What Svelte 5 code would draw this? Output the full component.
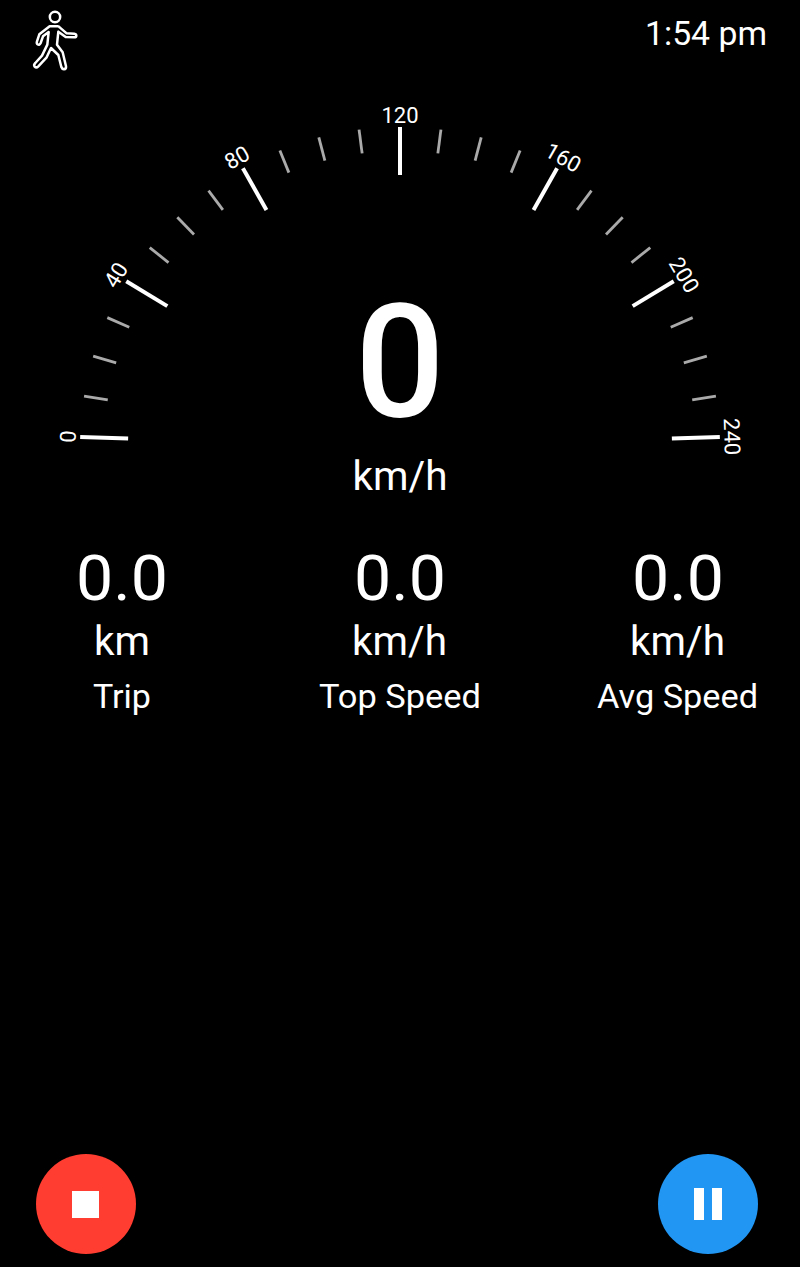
<script>
  const step = 88.2 / 12;
  const ticks = Array.from({ length: 25 }, (_, i) => ({
    angle: (i - 12) * step,
    major: i % 4 === 0,
    value: i * 10
  }));
  const stats = [
    { value: '0.0', unit: 'km', unitWidth: 56, name: 'Trip', nameWidth: 58 },
    { value: '0.0', unit: 'km/h', unitWidth: 95, name: 'Top Speed', nameWidth: 162 },
    { value: '0.0', unit: 'km/h', unitWidth: 95, name: 'Avg Speed', nameWidth: 161 }
  ];
</script>

{#snippet line(text, width, size, height, base)}
  <svg class="line" {width} {height}>
    <text x="0" y={base} font-size={size} textLength={width} lengthAdjust="spacingAndGlyphs">{text}</text>
  </svg>
{/snippet}

<main>
  <header>
    <svg class="walk" width="80" height="80" viewBox="0 0 240 240" aria-label="Walking">
      <circle cx="105" cy="51" r="15.5" />
      <path d="M89 79H113Q117 79 120 83L140 100L163 101Q169 102 169 107Q169 112 162 112L137 111L115 95L111 134L128 157L138 199Q139 207 132 208Q126 207 124 201L115 165L93 144L80 172L55 199Q49 205 44 200Q40 195 46 189L66 167L82 134L86 96L69 109L62 129Q59 136 53 133Q49 131 51 124L58 103Z" />
    </svg>
    <div class="time">{@render line('1:54 pm', 122, 33, 46, 31)}</div>
  </header>

  <svg class="gauge" width="800" height="430" viewBox="0 90 800 430">
    {#each ticks as t}
      <g transform="rotate({t.angle} 400 447)">
        <line x1="400" x2="400" y1="127" y2={t.major ? 175 : 151} class:major={t.major} />
        {#if t.major}
          <text class="mark" x="400" y="122.5">{t.value}</text>
        {/if}
      </g>
    {/each}
    <text class="speed" x="400" y="416">0</text>
    <text x="352.5" y="490" font-size="40" textLength="95" lengthAdjust="spacingAndGlyphs">km/h</text>
  </svg>

  <section>
    {#each stats as s}
      <div class="stat">
        {@render line(s.value, 92, 63, 70, 59.5)}
        {@render line(s.unit, s.unitWidth, 40, 56, 44.5)}
        {@render line(s.name, s.nameWidth, 33, 56, 42)}
      </div>
    {/each}
  </section>

  <footer>
    <button class="stop" aria-label="Stop"><i></i></button>
    <button class="pause" aria-label="Pause"><i></i><i></i></button>
  </footer>
</main>

<style>
  :global(body) {
    margin: 0;
    background: #000;
  }
  main {
    display: flex;
    flex-direction: column;
    width: 800px;
    height: 1267px;
    background: #000;
    color: #fff;
    font-family: Roboto, sans-serif;
    overflow: hidden;
  }
  svg {
    display: block;
    overflow: visible;
  }
  text {
    fill: #fff;
  }
  header {
    display: flex;
    justify-content: space-between;
    height: 90px;
    padding: 0 33.5px 0 20px;
  }
  .time {
    padding-top: 14px;
  }
  .walk {
    fill: none;
    stroke: #fff;
    stroke-width: 7.5;
    stroke-linejoin: round;
  }
  .gauge line {
    stroke: #aaa;
    stroke-width: 2.8;
  }
  .gauge line.major {
    stroke: #fff;
    stroke-width: 4;
  }
  .mark {
    font-size: 22px;
    text-anchor: middle;
  }
  .speed {
    font-size: 158px;
    font-weight: 500;
    text-anchor: middle;
  }
  section {
    display: flex;
    justify-content: space-between;
    padding: 20px 42px 0 41px;
  }
  .stat {
    display: flex;
    flex-direction: column;
    align-items: center;
    width: 161px;
  }
  footer {
    display: flex;
    justify-content: space-between;
    margin-top: auto;
    padding: 0 42px 13px 35.5px;
  }
  button {
    display: flex;
    align-items: center;
    justify-content: center;
    width: 100px;
    height: 100px;
    padding: 0;
    border: 0;
    border-radius: 50%;
  }
  .stop {
    background: #ff3d30;
  }
  .stop i {
    width: 27px;
    height: 27px;
    background: #fff;
  }
  .pause {
    gap: 8px;
    background: #2196f3;
  }
  .pause i {
    width: 10px;
    height: 32px;
    background: #fff;
  }
</style>
